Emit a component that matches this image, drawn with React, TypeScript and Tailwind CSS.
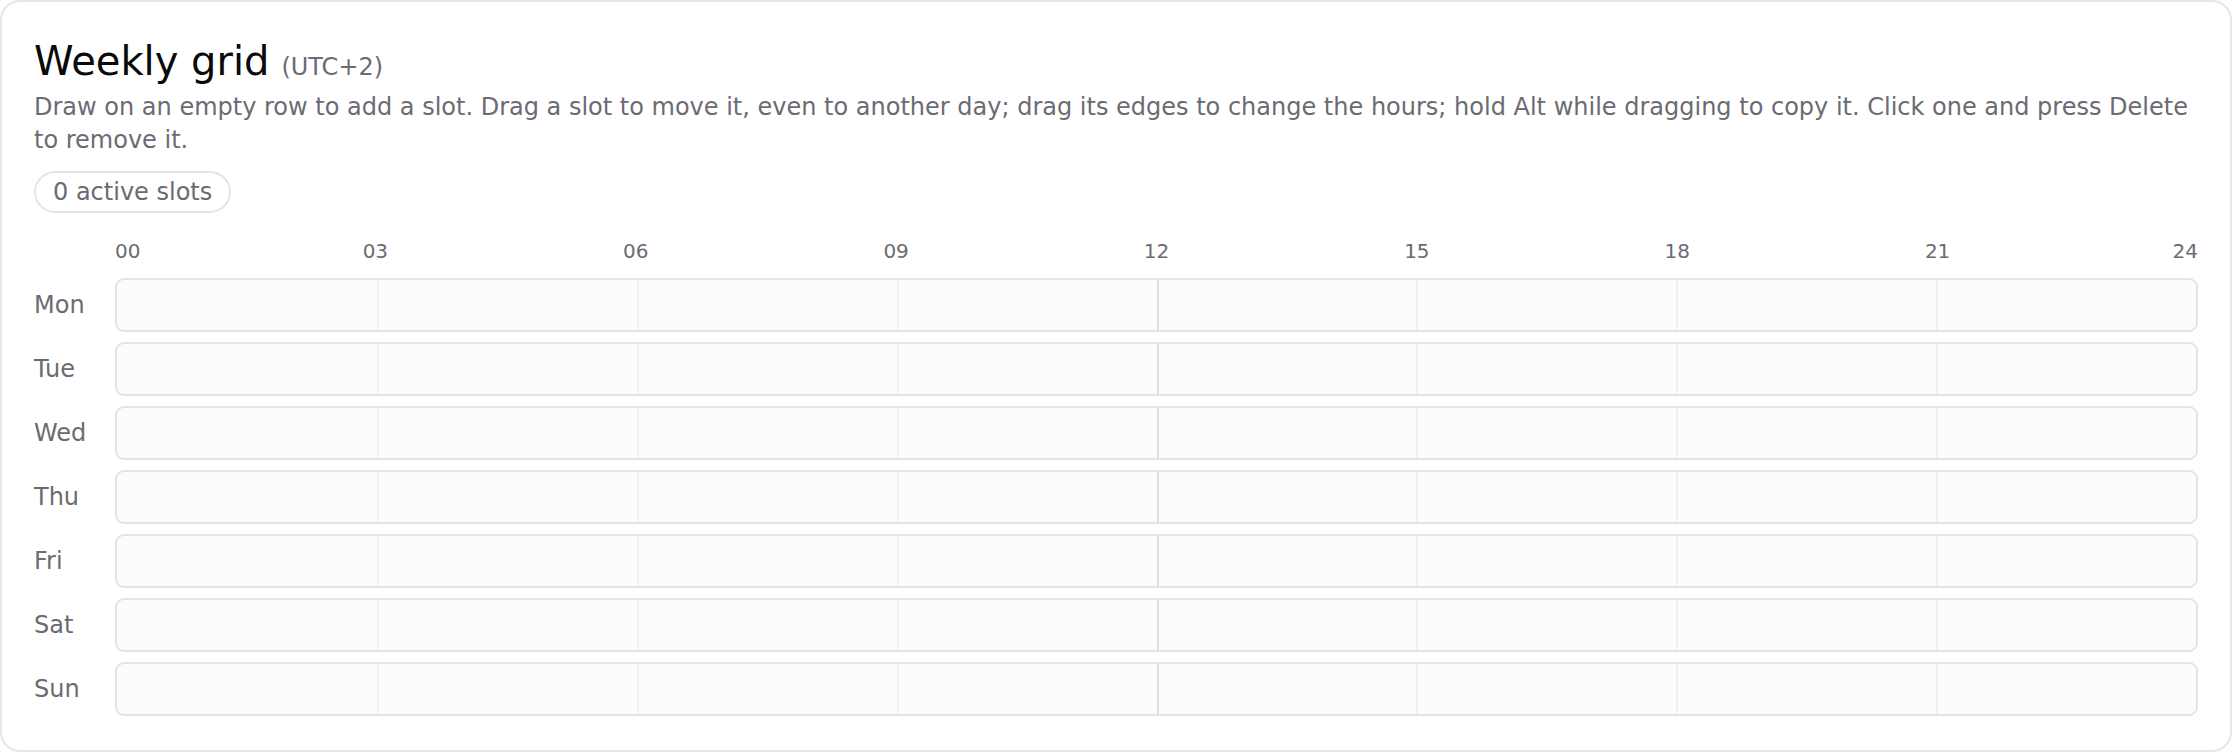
import { useState } from 'react';

const DAYS = ['Mon', 'Tue', 'Wed', 'Thu', 'Fri', 'Sat', 'Sun'];
const HOURS = [0, 3, 6, 9, 12, 15, 18, 21, 24];

interface Slot {
  day: number;
  start: number; // hour
  end: number;
}

function HourAxis() {
  return (
    <div className="relative h-[30px] ml-[81px]">
      {HOURS.map((h, i) => {
        // first label hugs the left edge, last one the right, the rest sit centred on their tick
        const align =
          i === 0 ? '' : i === HOURS.length - 1 ? '-translate-x-full' : '-translate-x-1/2';
        return (
          <span
            key={h}
            className={`absolute top-0 text-[20px] leading-[30px] text-[#6b6b73] ${align}`}
            style={{ left: `${(h / 24) * 100}%` }}
          >
            {String(h).padStart(2, '0')}
          </span>
        );
      })}
    </div>
  );
}

function DayRow({ day, slots }: { day: string; slots: Slot[] }) {
  return (
    <div className="flex items-center">
      <div className="w-[81px] shrink-0 text-[24px] leading-[33px] text-[#6b6b73]">{day}</div>
      <div className="relative flex-1 h-[54px] rounded-[9px] border-2 border-[#e4e4e4] bg-[#fcfcfc] overflow-hidden">
        <div className="grid grid-cols-8 h-full">
          {HOURS.slice(0, 8).map((h, i) => (
            <div
              key={h}
              className={
                i === 0
                  ? ''
                  : h === 12
                    ? 'border-l-2 border-[#dfdfdf]'
                    : 'border-l-2 border-[#f0f0f0]'
              }
            />
          ))}
        </div>
        {slots.length > 0 && null /* TODO: render slots */}
      </div>
    </div>
  );
}

export default function App() {
  const [slots] = useState<Slot[]>([]);

  return (
    <div className="w-[2232px] font-['DejaVu_Sans',sans-serif]">
      <div className="border-2 border-[#e6e6e6] rounded-[20px] bg-white px-[32px] pt-[36px] pb-[34px]">
        {/* Header */}
        <div className="flex items-baseline">
          <h1 className="text-[40px] leading-[47px] text-[#0a0a0a]">Weekly grid</h1>
          <span className="ml-[12px] text-[24px] text-[#6b6b73]">(UTC+2)</span>
        </div>
        <p className="mt-[6px] text-[24px] leading-[33px] text-[#6b6b73]">
          Draw on an empty row to add a slot. Drag a slot to move it, even to another day; drag its
          edges to change the hours; hold Alt while dragging to copy it. Click one and press Delete
          to remove it.
        </p>
        <div className="mt-[14px] flex">
          <span className="h-[42px] flex items-center px-[17px] rounded-full border-2 border-[#e4e4e4] text-[24px] text-[#6b6b73]">
            {slots.length} active slots
          </span>
        </div>

        {/* Grid */}
        <div className="mt-[23px]">
          <HourAxis />
          <div className="mt-[12px] flex flex-col gap-[10px]">
            {DAYS.map((d, i) => (
              <DayRow key={d} day={d} slots={slots.filter((s) => s.day === i)} />
            ))}
          </div>
        </div>
      </div>
    </div>
  );
}
